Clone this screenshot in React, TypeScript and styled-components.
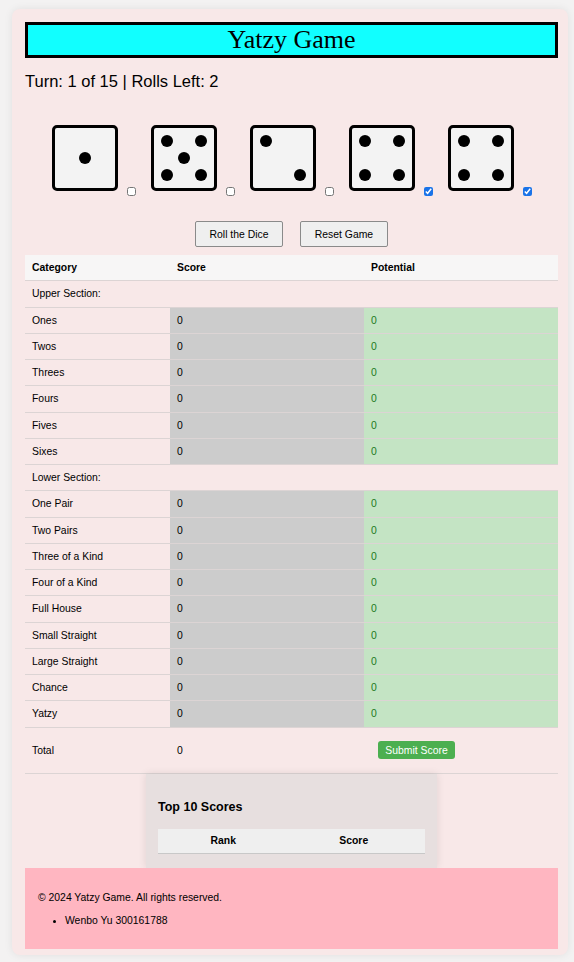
import React from "react";
import styled, { createGlobalStyle } from "styled-components";

const Global = createGlobalStyle`
  html, body { margin: 0; padding: 0; background: #f3f2f2; }
  body { font-family: "Liberation Sans", Arial, sans-serif; color: #000; }
`;

const Page = styled.div`
  padding: 9px 6px 0 12px;
  min-height: 962px;
  box-sizing: border-box;
`;

const Container = styled.div`
  background: #f8e8e8;
  border-radius: 8px;
  box-shadow: 0 0 8px rgba(0, 0, 0, 0.08);
  padding: 13px 10px 6px 13px;
`;

const Title = styled.h1`
  margin: 0;
  height: 36px;
  box-sizing: border-box;
  border: 3px solid #000;
  background: #11ffff;
  font-family: "Liberation Serif", "Times New Roman", serif;
  font-weight: normal;
  font-size: 26px;
  line-height: 30px;
  text-align: center;
`;

const Status = styled.p`
  margin: 14px 0 0;
  font-size: 16.5px;
  line-height: 19px;
`;

const DiceRow = styled.div`
  display: flex;
  justify-content: center;
  margin-top: 34px;
  height: 71px;
`;

const DieUnit = styled.div`
  display: flex;
  align-items: flex-start;
  margin-right: 15px;
  &:last-child { margin-right: 0; }
`;

const Hold = styled.input`
  width: 9px;
  height: 9px;
  margin: 62px 0 0 9px;
  accent-color: #1a73e8;
`;

const ButtonRow = styled.div`
  display: flex;
  justify-content: center;
  gap: 17px;
  margin-top: 25px;
`;

const GrayButton = styled.button`
  width: 88px;
  height: 26px;
  background: #efefef;
  border: 1px solid #8a8a8a;
  border-radius: 2px;
  font-family: "Liberation Sans", Arial, sans-serif;
  font-size: 10.4px;
  color: #000;
  padding: 0;
`;

const Board = styled.div`
  margin-top: 8px;
  font-size: 10.4px;
`;

const Row = styled.div<{ $head?: boolean; $tall?: boolean }>`
  display: grid;
  grid-template-columns: 145px 194px 1fr;
  height: ${(p) => (p.$tall ? "46px" : "26.25px")};
  box-sizing: border-box;
  border-bottom: 1px solid #dcd4d4;
  background: ${(p) => (p.$head ? "#f7f6f6" : "transparent")};
  font-weight: ${(p) => (p.$head ? "bold" : "normal")};
`;

const Cell = styled.div<{ $kind?: "score" | "potential" }>`
  display: flex;
  align-items: center;
  padding: 0 7px;
  background: ${(p) =>
    p.$kind === "score" ? "#cccccc" : p.$kind === "potential" ? "#c4e4c4" : "transparent"};
  color: ${(p) => (p.$kind === "potential" ? "#1e7a1e" : "#000")};
`;

const Submit = styled.button`
  margin-left: 7px;
  width: 77px;
  height: 18px;
  padding: 0;
  border: none;
  border-radius: 3px;
  background: #4caf50;
  color: #fff;
  font-family: "Liberation Sans", Arial, sans-serif;
  font-size: 10.4px;
`;

const TopBox = styled.div`
  width: 291px;
  box-sizing: border-box;
  margin: 0 auto;
  padding: 26px 12px 14px;
  background: #e7dfdf;
  box-shadow: 0 0 8px rgba(0, 0, 0, 0.1);
`;

const TopTitle = styled.h2`
  margin: 0;
  font-size: 12.5px;
  line-height: 15px;
  font-weight: bold;
`;

const TopHead = styled.div`
  margin-top: 14px;
  display: grid;
  grid-template-columns: 1fr 1fr;
  height: 25px;
  box-sizing: border-box;
  background: #efefef;
  border-bottom: 1px solid #c8c8c8;
  font-size: 10.4px;
  font-weight: bold;
  padding-right: 6px;
`;

const TopHeadCell = styled.div`
  display: flex;
  align-items: center;
  justify-content: center;
`;

const Footer = styled.footer`
  background: #ffb6c1;
  padding: 23px 13px 22px;
  font-size: 10.4px;
`;

const FooterText = styled.p`
  margin: 0;
  line-height: 13px;
`;

const Credits = styled.ul`
  margin: 10px 0 0;
  padding-left: 27px;
  line-height: 13px;
  li::marker { font-size: 9px; }
`;

const dotPos: Record<number, [number, number][]> = {
  1: [[33, 33]],
  2: [[16, 16], [50, 50]],
  3: [[16, 16], [33, 33], [50, 50]],
  4: [[16, 16], [50, 16], [16, 50], [50, 50]],
  5: [[16, 16], [50, 16], [33, 33], [16, 50], [50, 50]],
  6: [[16, 16], [50, 16], [16, 33], [50, 33], [16, 50], [50, 50]],
};

function Die({ value }: { value: number }) {
  return (
    <svg width="66" height="66" viewBox="0 0 66 66">
      <rect x="1.5" y="1.5" width="63" height="63" rx="3.5" fill="#f3f3f3" stroke="#000" strokeWidth="3" />
      {dotPos[value].map(([x, y], i) => (
        <circle key={i} cx={x} cy={y} r="6" fill="#000" />
      ))}
    </svg>
  );
}

const dice = [
  { value: 1, held: false },
  { value: 5, held: false },
  { value: 2, held: false },
  { value: 4, held: true },
  { value: 4, held: true },
];

const upper = ["Ones", "Twos", "Threes", "Fours", "Fives", "Sixes"];
const lower = [
  "One Pair",
  "Two Pairs",
  "Three of a Kind",
  "Four of a Kind",
  "Full House",
  "Small Straight",
  "Large Straight",
  "Chance",
  "Yatzy",
];

function CategoryRow({ name }: { name: string }) {
  return (
    <Row>
      <Cell>{name}</Cell>
      <Cell $kind="score">0</Cell>
      <Cell $kind="potential">0</Cell>
    </Row>
  );
}

function SectionRow({ label }: { label: string }) {
  return (
    <Row>
      <Cell>{label}</Cell>
      <Cell />
      <Cell />
    </Row>
  );
}

export default function App() {
  return (
    <Page>
      <Global />
      <Container>
        <Title>Yatzy Game</Title>
        <Status>Turn: 1 of 15 | Rolls Left: 2</Status>
        <DiceRow>
          {dice.map((d, i) => (
            <DieUnit key={i}>
              <Die value={d.value} />
              <Hold type="checkbox" defaultChecked={d.held} />
            </DieUnit>
          ))}
        </DiceRow>
        <ButtonRow>
          <GrayButton>Roll the Dice</GrayButton>
          <GrayButton>Reset Game</GrayButton>
        </ButtonRow>
        <Board>
          <Row $head>
            <Cell>Category</Cell>
            <Cell>Score</Cell>
            <Cell>Potential</Cell>
          </Row>
          <SectionRow label="Upper Section:" />
          {upper.map((n) => (
            <CategoryRow key={n} name={n} />
          ))}
          <SectionRow label="Lower Section:" />
          {lower.map((n) => (
            <CategoryRow key={n} name={n} />
          ))}
          <Row $tall>
            <Cell>Total</Cell>
            <Cell>0</Cell>
            <Cell>
              <Submit>Submit Score</Submit>
            </Cell>
          </Row>
        </Board>
        <TopBox>
          <TopTitle>Top 10 Scores</TopTitle>
          <TopHead>
            <TopHeadCell>Rank</TopHeadCell>
            <TopHeadCell>Score</TopHeadCell>
          </TopHead>
        </TopBox>
        <Footer>
          <FooterText>© 2024 Yatzy Game. All rights reserved.</FooterText>
          <Credits>
            <li>Wenbo Yu 300161788</li>
          </Credits>
        </Footer>
      </Container>
    </Page>
  );
}
